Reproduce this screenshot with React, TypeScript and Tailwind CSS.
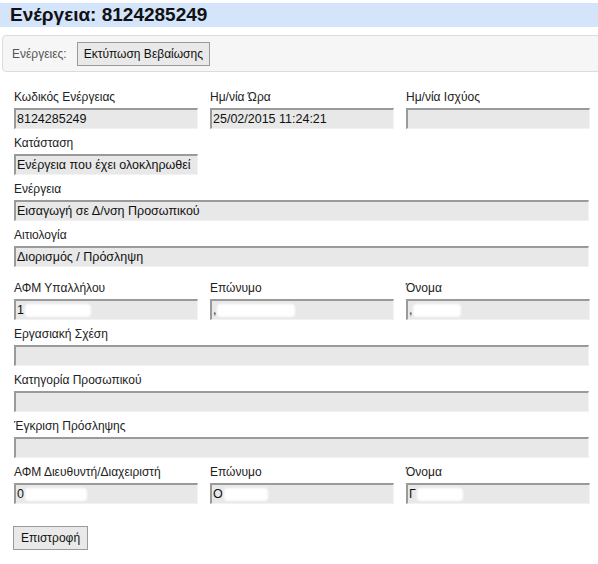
import React from "react";

const font = { fontFamily: '"Liberation Sans", Arial, sans-serif' };

function Blob({ w, lead }: { w: number; lead?: string }) {
  return (
    <span className="inline-flex items-center">
      {lead && <span>{lead}</span>}
      <span
        className="ml-[1px] inline-block h-[13px] rounded-[4px] bg-white blur-[0.8px]"
        style={{ width: w }}
      />
    </span>
  );
}

function Field({
  label,
  value,
  wide = false,
}: {
  label: string;
  value?: React.ReactNode;
  wide?: boolean;
}) {
  return (
    <div className={wide ? "w-[575px]" : "w-[184px]"}>
      <div className="h-[15px] leading-[15px] text-[12px] text-[#222]">{label}</div>
      <div className="mt-[3px] flex h-[21px] items-center overflow-hidden whitespace-nowrap border-t-2 border-l-2 border-r border-b border-t-[#9a9a9a] border-l-[#9a9a9a] border-r-[#f2f2f2] border-b-[#f2f2f2] bg-[#e8e8e8] pl-[1px] text-[12.5px] text-[#111]">
        {value}
      </div>
    </div>
  );
}

function Row({ children, className = "" }: { children: React.ReactNode; className?: string }) {
  return <div className={`flex gap-[12px] ${className}`}>{children}</div>;
}

export default function App() {
  return (
    <div className="w-[598px] h-[564px] bg-white overflow-hidden" style={font}>
      <div className="mt-[3px] h-[24px] bg-[#d3e4fb] pl-[10px] text-[19px] font-bold leading-[24px] text-[#111]">
        Ενέργεια: 8124285249
      </div>

      <div className="ml-[2px] mt-[8px] -mr-[6px] flex h-[37px] items-center gap-[10px] rounded-[4px] border border-[#dcdcdc] bg-[#f6f6f6] pl-[9px]">
        <span className="text-[12px] text-[#555]">Ενέργειες:</span>
        <button className="h-[24px] border border-[#9a9a9a] bg-[#e9e9e9] px-[6px] text-[12px] text-[#111]">
          Εκτύπωση Βεβαίωσης
        </button>
      </div>

      <div className="ml-[14px] mt-[18px] flex flex-col gap-[7px]">
        <Row>
          <Field label="Κωδικός Ενέργειας" value="8124285249" />
          <Field label="Ημ/νία Ώρα" value="25/02/2015 11:24:21" />
          <Field label="Ημ/νία Ισχύος" />
        </Row>
        <Field label="Κατάσταση" value="Ενέργεια που έχει ολοκληρωθεί" />
        <Field label="Ενέργεια" value="Εισαγωγή σε Δ/νση Προσωπικού" wide />
        <Field label="Αιτιολογία" value="Διορισμός / Πρόσληψη" wide />
        <Row className="mt-[7px]">
          <Field label="ΑΦΜ Υπαλλήλου" value={<Blob lead="1" w={66} />} />
          <Field label="Επώνυμο" value={<Blob lead="," w={78} />} />
          <Field label="Όνομα" value={<Blob lead="," w={48} />} />
        </Row>
        <Field label="Εργασιακή Σχέση" wide />
        <Field label="Κατηγορία Προσωπικού" wide />
        <Field label="Έγκριση Πρόσληψης" wide />
        <Row>
          <Field label="ΑΦΜ Διευθυντή/Διαχειριστή" value={<Blob lead="0" w={62} />} />
          <Field label="Επώνυμο" value={<Blob lead="Ο" w={44} />} />
          <Field label="Όνομα" value={<Blob lead="Γ" w={46} />} />
        </Row>
      </div>

      <button className="ml-[13px] mt-[22px] h-[24px] border border-[#9a9a9a] bg-[#e9e9e9] px-[7px] text-[12px] text-[#111]">
        Επιστροφή
      </button>
    </div>
  );
}
